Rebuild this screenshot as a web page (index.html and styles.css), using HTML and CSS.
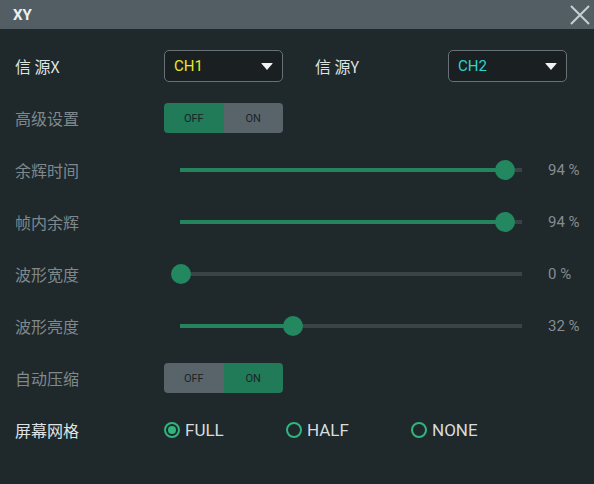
FILE: index.html
```html
<!DOCTYPE html>
<html lang="zh">
<head>
<meta charset="utf-8">
<link rel="stylesheet" href="styles.css">
</head>
<body>
<div class="dialog">
  <div class="titlebar">
    <span class="title">XY</span>
    <svg class="close" width="20" height="20" viewBox="0 0 20 20"><path d="M1 1L19 19M19 1L1 19" stroke="#c9cfd1" stroke-width="2" fill="none"/></svg>
  </div>
  <div class="content">
    <div class="row">
      <div class="label bright">信 源X</div>
      <div class="select"><span class="ch1">CH1</span><span class="tri"></span></div>
      <div class="label bright label-y">信 源Y</div>
      <div class="select"><span class="ch2">CH2</span><span class="tri"></span></div>
    </div>
    <div class="row">
      <div class="label">高级设置</div>
      <div class="toggle"><span class="seg on">OFF</span><span class="seg">ON</span></div>
    </div>
    <div class="row">
      <div class="label">余辉时间</div>
      <div class="slider"><div class="track"><div class="fill" style="width:325px"></div></div><div class="knob" style="left:325px"></div></div>
      <div class="value">94 %</div>
    </div>
    <div class="row">
      <div class="label">帧内余辉</div>
      <div class="slider"><div class="track"><div class="fill" style="width:325px"></div></div><div class="knob" style="left:325px"></div></div>
      <div class="value">94 %</div>
    </div>
    <div class="row">
      <div class="label">波形宽度</div>
      <div class="slider"><div class="track"><div class="fill" style="width:0px"></div></div><div class="knob" style="left:1px"></div></div>
      <div class="value">0 %</div>
    </div>
    <div class="row">
      <div class="label">波形亮度</div>
      <div class="slider"><div class="track"><div class="fill" style="width:113px"></div></div><div class="knob" style="left:113px"></div></div>
      <div class="value">32 %</div>
    </div>
    <div class="row">
      <div class="label">自动压缩</div>
      <div class="toggle"><span class="seg">OFF</span><span class="seg on">ON</span></div>
    </div>
    <div class="row">
      <div class="label bright">屏幕网格</div>
      <div class="radios">
        <div class="radio checked"><span class="circle"></span>FULL</div>
        <div class="radio"><span class="circle"></span>HALF</div>
        <div class="radio"><span class="circle"></span>NONE</div>
      </div>
    </div>
  </div>
</div>
</body>
</html>
```
FILE: styles.css
```css
html, body {
  margin: 0;
  padding: 0;
  background: #1f282b;
  width: 594px;
  height: 484px;
  overflow: hidden;
  font-family: "Roboto", "Noto Sans CJK SC", sans-serif;
}
.dialog {
  width: 594px;
  height: 484px;
  background: #1f282b;
}
.titlebar {
  height: 29px;
  background: #525e64;
  display: flex;
  align-items: center;
  justify-content: space-between;
  padding: 0 4px 0 13px;
}
.title {
  color: #eef0f0;
  font-size: 15px;
  font-weight: bold;
  font-family: "Roboto", sans-serif;
}
.close {
  display: block;
  margin-top: 1px;
}
.content {
  padding-top: 11px;
  padding-left: 15px;
}
.row {
  height: 52px;
  display: flex;
  align-items: center;
}
.label {
  width: 149px;
  color: #7f888b;
  font-size: 16px;
  font-family: "Noto Sans CJK SC", sans-serif;
}
.label.bright {
  color: #dfe3e4;
}
.label.label-y {
  width: 133px;
  margin-left: 32px;
}
.select {
  box-sizing: border-box;
  width: 119px;
  height: 32px;
  border: 1px solid #687276;
  border-radius: 5px;
  background: #1a1f21;
  display: flex;
  align-items: center;
  justify-content: space-between;
  padding: 0 9px 0 9px;
  font-size: 15px;
}
.ch1 { color: #e8e82c; }
.ch2 { color: #2fd4d0; }
.tri {
  width: 0;
  height: 0;
  border-left: 6px solid transparent;
  border-right: 6px solid transparent;
  border-top: 7px solid #f2f2f2;
  border-radius: 1px;
}
.toggle {
  width: 119px;
  height: 30px;
  border-radius: 4px;
  overflow: hidden;
  display: flex;
}
.seg {
  flex: 1;
  background: #59646a;
  color: #1a2326;
  font-size: 11px;
  display: flex;
  align-items: center;
  justify-content: center;
  padding-top: 1px;
}
.seg.on {
  background: #217a58;
}
.slider {
  position: relative;
  width: 342px;
  height: 22px;
  margin-left: 16px;
  display: flex;
  align-items: center;
}
.track {
  width: 342px;
  height: 4px;
  background: #3a4346;
}
.fill {
  height: 4px;
  background: #23845e;
}
.knob {
  position: absolute;
  top: 1px;
  width: 20px;
  height: 20px;
  margin-left: -10px;
  border-radius: 50%;
  background: #23875f;
}
.value {
  margin-left: 26px;
  color: #858d90;
  font-size: 15px;
}
.radios {
  display: flex;
  align-items: center;
}
.radio {
  display: flex;
  align-items: center;
  color: #d8dcdd;
  font-size: 17px;
  width: 122px;
}
.radio:nth-child(2) { width: 125px; }
.circle {
  box-sizing: border-box;
  width: 16px;
  height: 16px;
  border: 2px solid #2fb57d;
  border-radius: 50%;
  margin-right: 5px;
  margin-top: -1px;
  position: relative;
}
.radio.checked .circle::after {
  content: "";
  position: absolute;
  left: 2px;
  top: 2px;
  width: 8px;
  height: 8px;
  border-radius: 50%;
  background: #2fb57d;
}
```
